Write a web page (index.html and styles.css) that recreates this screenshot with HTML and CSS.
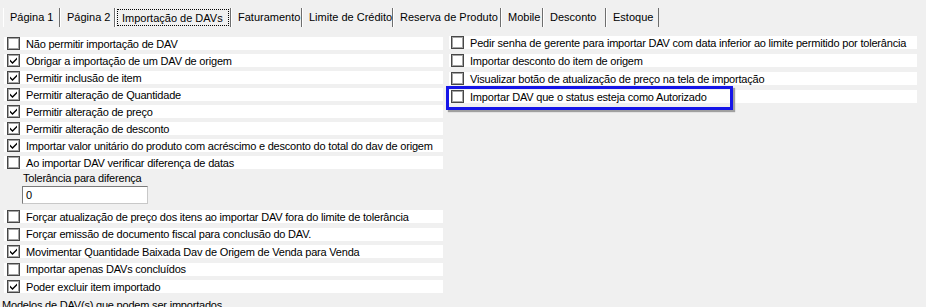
FILE: index.html
```html
<!DOCTYPE html>
<html lang="pt">
<head>
    <title>Importação de DAVs</title>
    <link rel="stylesheet" href="styles.css">
</head>
<body>
    <div class="tabs">
        <div class="tab t1">Página 1</div>
        <div class="tab t2">Página 2</div>
        <div class="tab t3 active"><span class="focus">Importação de DAVs</span></div>
        <div class="tab t4">Faturamento</div>
        <div class="tab t5">Limite de Crédito</div>
        <div class="tab t6">Reserva de Produto</div>
        <div class="tab t7">Mobile</div>
        <div class="tab t8">Desconto</div>
        <div class="tab t9">Estoque</div>
    </div>

    <div class="page">
        <div class="col left">
            <div class="row"><span class="box"></span>Não permitir importação de DAV</div>
            <div class="row"><span class="box checked"></span>Obrigar a importação de um DAV de origem</div>
            <div class="row"><span class="box checked"></span>Permitir inclusão de item</div>
            <div class="row"><span class="box checked"></span>Permitir alteração de Quantidade</div>
            <div class="row"><span class="box checked"></span>Permitir alteração de preço</div>
            <div class="row"><span class="box checked"></span>Permitir alteração de desconto</div>
            <div class="row"><span class="box checked"></span>Importar valor unitário do produto com acréscimo e desconto do total do dav de origem</div>
            <div class="row"><span class="box"></span>Ao importar DAV verificar diferença de datas</div>

            <div class="field-label">Tolerância para diferença</div>
            <div class="field">0</div>

            <div class="row lower"><span class="box"></span>Forçar atualização de preço dos itens ao importar DAV fora do limite de tolerância</div>
            <div class="row lower"><span class="box"></span>Forçar emissão de documento fiscal para conclusão do DAV.</div>
            <div class="row lower"><span class="box checked"></span>Movimentar Quantidade Baixada Dav de Origem de Venda para Venda</div>
            <div class="row lower"><span class="box"></span>Importar apenas DAVs concluídos</div>
            <div class="row lower"><span class="box checked"></span>Poder excluir item importado</div>

            <div class="section-label">Modelos de DAV(s) que podem ser importados</div>
        </div>

        <div class="col right">
            <div class="row"><span class="box"></span>Pedir senha de gerente para importar DAV com data inferior ao limite permitido por tolerância</div>
            <div class="row"><span class="box"></span>Importar desconto do item de origem</div>
            <div class="row"><span class="box"></span>Visualizar botão de atualização de preço na tela de importação</div>
            <div class="row marked"><span class="box"></span>Importar DAV que o status esteja como Autorizado<span class="highlight"></span></div>
        </div>
    </div>

    <script>
        // draw the check mark in every checked box
        document.querySelectorAll(".box.checked").forEach(function (box) {
            box.innerHTML = '<svg width="9" height="9" viewBox="0 0 9 9"><path d="M1 3.5 L3.5 6 L8 1.5 L8 3.5 L3.5 8 L1 5.5 Z" fill="#000"/></svg>';
        });
    </script>
</body>
</html>
```

FILE: styles.css
```css
body {
    font-family: "Liberation Sans", Arial, sans-serif;
    font-size: 11px;
    color: #000;
    margin: 0;
    padding: 0;
    background-color: #f0f0f0;
    width: 926px;
    height: 307px;
    overflow: hidden;
}

.tabs {
    display: flex;
    height: 22px;
    padding: 8px 0 0 3px;
}

.tab {
    box-sizing: border-box;
    height: 19px;
    padding: 2px 0 0 6px;
    line-height: 14px;
    border-left: 1px solid #ffffff;
    border-right: 1px solid #6e6e6e;
    white-space: nowrap;
}
.t1 { width: 57px; }
.t2 { width: 55px; }
.t3 { width: 116px; padding: 1px 0 0 1px; }
.t4 { width: 71px; }
.t5 { width: 91px; }
.t6 { width: 108px; }
.t7 { width: 42px; }
.t8 { width: 63px; }
.t9 { width: 53px; }

.focus {
    display: block;
    box-sizing: border-box;
    height: 17px;
    padding: 1px 0 0 4px;
    border: 1px dotted #000;
    margin-right: 1px;
}

.page {
    display: flex;
    gap: 6px;
    padding-left: 4px;
}

.col {
    display: flex;
    flex-direction: column;
}
.left {
    width: 439px;
    padding-top: 7px;
}
.right {
    width: 468px;
    padding-top: 6px;
}

.row {
    position: relative;
    display: flex;
    align-items: center;
    gap: 6px;
    height: 13px;
    padding-left: 3px;
    margin-bottom: 4px;
    background-color: #ffffff;
    white-space: nowrap;
    letter-spacing: -0.2px;
}
.right .row {
    margin-bottom: 5px;
    padding-left: 2px;
}
.row.lower {
    margin-bottom: 4.5px;
}

.box {
    box-sizing: border-box;
    flex: none;
    width: 13px;
    height: 13px;
    border: 1px solid #474747;
    box-shadow: inset 0 0 0 1px #a5a5a5;
    background-color: #ffffff;
    display: flex;
    align-items: center;
    justify-content: center;
}

.field-label {
    height: 13px;
    line-height: 13px;
    margin: -1px 0 0 19px;
    letter-spacing: -0.2px;
}

.field {
    box-sizing: border-box;
    width: 126px;
    height: 18px;
    margin: 1px 0 6px 18px;
    padding: 2px 0 0 3px;
    background-color: #ffffff;
    border: 1px solid #7a7a7a;
    border-right-color: #c8c8c8;
    border-bottom-color: #c8c8c8;
}

.section-label {
    margin: 1px 0 0 -2px;
    line-height: 13px;
    letter-spacing: -0.2px;
}

.highlight {
    position: absolute;
    top: -4px;
    left: -3px;
    width: 287px;
    height: 24px;
    box-sizing: border-box;
    border: 3px solid #1515e8;
    box-shadow: 2px 2px 1px #a0a0a0;
}
```
